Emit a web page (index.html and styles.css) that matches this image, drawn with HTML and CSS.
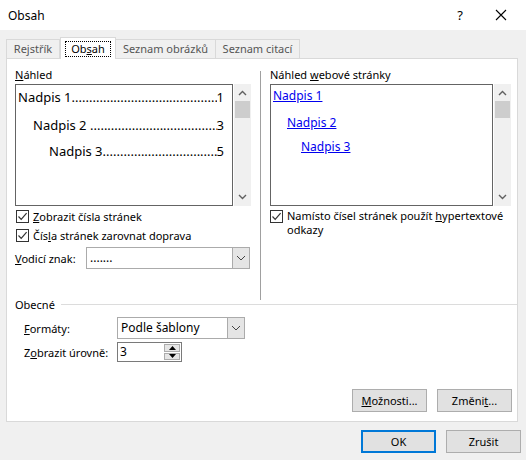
FILE: index.html
```html
<!DOCTYPE html>
<html lang="cs">
<head>
<meta charset="utf-8">
<title>Obsah</title>
<link rel="stylesheet" href="styles.css">
</head>
<body>
<div class="dialog">
  <div class="titlebar">
    <span class="title">Obsah</span>
    <span class="tb-help">?</span>
    <span class="tb-close"><svg width="12" height="12" viewBox="0 0 12 12"><path d="M1 1L11 11M11 1L1 11" stroke="#000" stroke-width="1.1" fill="none"/></svg></span>
  </div>
  <div class="tabs">
    <div class="tab t1">Rejstřík</div>
    <div class="tab active"><span class="focus">Ob<u>s</u>ah</span></div>
    <div class="tab t3">Seznam obrázků</div>
    <div class="tab t4">Seznam citací</div>
  </div>
  <div class="pane">
    <div class="columns">
      <div class="col left">
        <div class="label"><u>N</u>áhled</div>
        <div class="preview">
          <div class="pbox">
            <div class="toc l1"><span>Nadpis 1</span><span class="dots"></span><span>1</span></div>
            <div class="toc l2"><span>Nadpis 2&nbsp;</span><span class="dots"></span><span>3</span></div>
            <div class="toc l3"><span>Nadpis 3</span><span class="dots"></span><span>5</span></div>
          </div>
          <div class="sbar">
            <svg class="arr" width="9" height="6" viewBox="0 0 9 6"><path d="M1 5L4.5 1.5L8 5" stroke="#606060" stroke-width="1.4" fill="none"/></svg>
            <div class="thumb"></div>
            <div class="sfill"></div>
            <svg class="arr" width="9" height="6" viewBox="0 0 9 6"><path d="M1 1L4.5 4.5L8 1" stroke="#606060" stroke-width="1.4" fill="none"/></svg>
          </div>
        </div>
        <label class="chk"><span class="box"><svg width="11" height="11" viewBox="0 0 11 11"><path d="M1.5 5.5L4.2 8.3L9.6 2.2" stroke="#333" stroke-width="1.2" fill="none"/></svg></span><span><u>Z</u>obrazit čísla stránek</span></label>
        <label class="chk"><span class="box"><svg width="11" height="11" viewBox="0 0 11 11"><path d="M1.5 5.5L4.2 8.3L9.6 2.2" stroke="#333" stroke-width="1.2" fill="none"/></svg></span><span>Čís<u>l</u>a stránek zarovnat doprava</span></label>
        <div class="row lead">
          <span class="rlabel"><u>V</u>odicí znak:</span>
          <div class="combo wide"><span class="cval">.......</span><span class="cbtn"><svg width="10" height="6" viewBox="0 0 10 6"><path d="M1 1L5 5L9 1" stroke="#444" stroke-width="1" fill="none"/></svg></span></div>
        </div>
      </div>
      <div class="divider"></div>
      <div class="col right">
        <div class="label">Náhled <u>w</u>ebové stránky</div>
        <div class="preview">
          <div class="pbox web">
            <a class="lnk w1">Nadpis 1</a>
            <a class="lnk w2">Nadpis 2</a>
            <a class="lnk w3">Nadpis 3</a>
          </div>
          <div class="sbar">
            <svg class="arr" width="9" height="6" viewBox="0 0 9 6"><path d="M1 5L4.5 1.5L8 5" stroke="#606060" stroke-width="1.4" fill="none"/></svg>
            <div class="thumb"></div>
            <div class="sfill"></div>
            <svg class="arr" width="9" height="6" viewBox="0 0 9 6"><path d="M1 1L4.5 4.5L8 1" stroke="#606060" stroke-width="1.4" fill="none"/></svg>
          </div>
        </div>
        <label class="chk multi"><span class="box"><svg width="11" height="11" viewBox="0 0 11 11"><path d="M1.5 5.5L4.2 8.3L9.6 2.2" stroke="#333" stroke-width="1.2" fill="none"/></svg></span><span class="mtext">Namísto čísel stránek použít <u>h</u>ypertextové<br>odkazy</span></label>
      </div>
    </div>
    <div class="group">
      <div class="ghead"><span>Obecné</span><span class="gline"></span></div>
      <div class="row fmt">
        <span class="glabel"><u>F</u>ormáty:</span>
        <div class="combo mid"><span class="cval">Podle šablony</span><span class="cbtn"><svg width="10" height="6" viewBox="0 0 10 6"><path d="M1 1L5 5L9 1" stroke="#444" stroke-width="1" fill="none"/></svg></span></div>
      </div>
      <div class="row lvl">
        <span class="glabel">Z<u>o</u>brazit úrovně:</span>
        <div class="spin"><span class="cval">3</span><span class="sbtns"><span class="sb"><svg width="7" height="4" viewBox="0 0 7 4"><path d="M0 4L3.5 0L7 4Z" fill="#000"/></svg></span><span class="sb"><svg width="7" height="4" viewBox="0 0 7 4"><path d="M0 0L3.5 4L7 0Z" fill="#000"/></svg></span></span></div>
      </div>
    </div>
    <div class="pbuttons">
      <button class="btn"><u>M</u>ožnosti...</button>
      <button class="btn">Změni<u>t</u>...</button>
    </div>
  </div>
  <div class="footer">
    <button class="btn def">OK</button>
    <button class="btn">Zrušit</button>
  </div>
</div>
</body>
</html>
```
FILE: styles.css
```css
* { box-sizing: border-box; }
html, body { margin: 0; padding: 0; }
body {
  width: 526px;
  height: 460px;
  background: #f0f0f0;
  font-family: "Noto Sans", "Open Sans", sans-serif;
  font-size: 11px;
  color: #000;
  overflow: hidden;
}
u { text-decoration: underline; text-underline-offset: 1px; }
.dialog { width: 526px; height: 460px; display: flex; flex-direction: column; }

.titlebar {
  height: 30px;
  background: #fff;
  display: flex;
  align-items: center;
  padding-left: 8px;
}
.title { flex: 1; font-size: 12px; }
.tb-help { width: 40px; text-align: center; font-size: 13px; }
.tb-close { width: 46px; display: flex; justify-content: center; padding-right: 4px; }

.tabs {
  display: flex;
  padding-left: 6px;
  margin-top: 8px;
  height: 20px;
  align-items: flex-end;
  position: relative;
  z-index: 1;
}
.tab {
  height: 19px;
  border: 1px solid #d9d9d9;
  border-bottom: none;
  border-left: none;
  background: #f0f0f0;
  color: #555;
  display: flex;
  align-items: center;
  justify-content: center;
  line-height: 14px;
}
.tab.t1 { width: 54px; border-left: 1px solid #d9d9d9; }
.tab.t3 { width: 100px; }
.tab.t4 { width: 84px; }
.tab.active {
  width: 56px;
  height: 22px;
  margin-bottom: -1px;
  background: #fff;
  color: #000;
  border-left: 1px solid #d9d9d9;
}
.focus { border: 1px dotted #000; padding: 0 5px; line-height: 14px; }

.pane {
  margin: 0 8px 0 6px;
  height: 364px;
  background: #fff;
  border: 1px solid #d9d9d9;
  display: flex;
  flex-direction: column;
}
.columns { display: flex; padding: 8px 0 0 8px; height: 235px; }
.col { flex: none; min-width: 0; }
.col.left { width: 236px; }
.divider { flex: none; width: 1px; background: #a0a0a0; margin: 4px 9px 0 9px; height: 229px; }
.col.right { width: 241px; }
.label { height: 15px; line-height: 15px; margin-bottom: 2px; }

.preview { display: flex; height: 122px; }
.pbox {
  flex: 1;
  min-width: 0;
  overflow: hidden;
  border: 1px solid #646464;
  background: #fff;
  padding: 0 8px 0 2px;
  font-size: 13px;
}
.sbar {
  flex: none;
  width: 17px;
  margin-left: 1px;
  background: #f0f0f0;
  display: flex;
  flex-direction: column;
  align-items: center;
}
.sbar .arr { margin-top: 6px; margin-bottom: 5px; }
.sbar .arr:last-child { margin-top: 0; margin-bottom: 6px; }
.thumb { width: 15px; height: 17px; background: #cdcdcd; }
.sfill { flex: 1; }

.toc { display: flex; white-space: nowrap; line-height: 19px; height: 19px; min-width: 0; }
.toc .dots { flex: 1; min-width: 0; overflow: hidden; white-space: nowrap; }
.toc .dots::before {
  content: "..................................................................................";
}
.toc.l1 { margin-top: 3px; }
.toc.l2 { margin-top: 9px; padding-left: 15px; }
.toc.l3 { margin-top: 7px; padding-left: 31px; }

.web { display: flex; flex-direction: column; align-items: flex-start; padding-left: 2px; }
.lnk { color: #0000ee; text-decoration: underline; line-height: 19px; font-size: 12px; }
.w1 { margin-top: 1px; }
.w2 { margin-top: 8px; margin-left: 14px; }
.w3 { margin-top: 5px; margin-left: 28px; }

.chk { display: flex; align-items: flex-start; gap: 4px; line-height: 15px; margin-left: 1px; }
.col.left .chk:first-of-type { margin-top: 3px; }
.chk + .chk { margin-top: 4px; }
.col.right .chk { margin-top: 3px; margin-left: 0; }
.mtext { white-space: nowrap; line-height: 14px; }
.box {
  width: 13px; height: 13px; flex: none;
  border: 1px solid #333;
  background: #fff;
  display: flex; align-items: center; justify-content: center;
  margin-top: 1px;
}

.row { display: flex; align-items: center; }
.lead { margin-top: 4px; }
.rlabel { width: 71px; }
.combo {
  height: 22px;
  border: 1px solid #ababab;
  display: flex;
  background: #fff;
}
.combo.wide { width: 164px; }
.combo.mid { width: 128px; }
.cval { flex: 1; padding-left: 3px; line-height: 20px; }
.combo .cval { font-size: 12px; }
.cbtn {
  width: 17px;
  background: #e5e5e5;
  border-left: 1px solid #ababab;
  display: flex; align-items: center; justify-content: center;
}

.group { padding: 3px 0 0 8px; }
.ghead { display: flex; align-items: center; height: 15px; }
.gline { flex: 1; height: 1px; background: #dcdcdc; margin-left: 6px; }
.glabel { width: 93px; }
.fmt { margin: 5px 0 0 9px; }
.lvl { margin: 3px 0 0 9px; }
.spin {
  width: 65px; height: 20px;
  border: 1px solid #7a7a7a;
  display: flex;
  background: #fff;
}
.spin .cval { line-height: 18px; padding-left: 2px; font-size: 12px; }
.sbtns { width: 17px; display: flex; flex-direction: column; padding: 1px 1px 1px 0; gap: 1px; }
.sb {
  flex: 1;
  background: #e5e5e5;
  border: 1px solid #acacac;
  display: flex; align-items: center; justify-content: center;
}

.pbuttons { display: flex; justify-content: flex-end; gap: 10px; margin-top: auto; margin-bottom: 9px; padding-right: 5px; }
.btn {
  width: 75px; height: 23px;
  font: inherit;
  color: #000;
  background: #e1e1e1;
  border: 1px solid #adadad;
  padding: 0;
}
.footer { display: flex; justify-content: flex-end; gap: 10px; padding: 8px 5px 0 0; }
.btn.def { border: 2px solid #0078d7; }
```
